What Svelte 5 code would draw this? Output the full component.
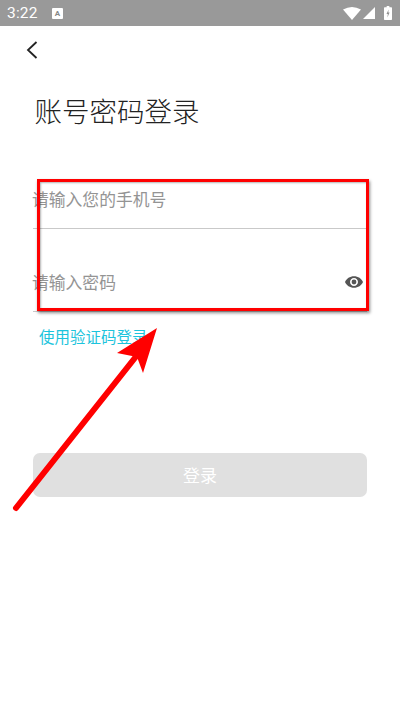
<script lang="ts">
  let phone = $state('')
  let password = $state('')
</script>

<div class="page">
  <div class="status">
    <span class="time">3:22</span>
    <span class="a-icon">A</span>
    <span class="status-icons">
      <svg width="18" height="13" viewBox="0 0 17 13" preserveAspectRatio="none"><path d="M0 2.5Q8.5-2.5 17 2.5L8.5 13Z" fill="#fff"/></svg>
      <svg width="12" height="12" viewBox="0 0 13 13"><path d="M13 0V13H0Z" fill="#fff"/></svg>
      <svg class="batt" width="8" height="14" viewBox="0 0 9 14" preserveAspectRatio="none"><path d="M3 0H6V1.2H8.2A.8.8 0 0 1 9 2V13.2A.8.8 0 0 1 8.2 14H.8A.8.8 0 0 1 0 13.2V2A.8.8 0 0 1 .8 1.2H3Z" fill="#fff"/><path d="M5.2 3.5 2.8 8H4.3L3.800 11.5 6.300 6.600H4.800Z" fill="#8f8f8f"/></svg>
    </span>
  </div>

  <button class="back" type="button" aria-label="返回">
    <svg width="14" height="20" viewBox="0 0 14 20"><path d="M11.5 2 3 10l8.5 8" fill="none" stroke="#222" stroke-width="1.800"/></svg>
  </button>

  <h1>账号密码登录</h1>

  <form class="form">
    <label class="field">
      <input bind:value={phone} placeholder="请输入您的手机号" />
    </label>
    <label class="field">
      <input type="password" bind:value={password} placeholder="请输入密码" />
      <svg class="eye" width="20" height="14" viewBox="0 0 20 14"><path fill-rule="evenodd" d="M10 1.200C5.900 1.200 2.400 3.600 1 7c1.400 3.400 4.900 5.800 9 5.800s7.600-2.400 9-5.800C17.600 3.600 14.100 1.200 10 1.200ZM10 11c-2.200 0-4-1.800-4-4s1.800-4 4-4 4 1.800 4 4-1.800 4-4 4Zm0-6.400A2.400 2.400 0 1 0 10 9.400 2.400 2.400 0 0 0 10 4.600Z" fill="#555"/></svg>
    </label>
    <a class="code-link" href="#code">使用验证码登录</a>
    <button class="submit" type="button">登录</button>
  </form>

  <div class="mark-box"></div>
  <svg class="mark-arrow" width="400" height="712" viewBox="0 0 400 712">
    <path d="M16 508 138 354" stroke="#f00" stroke-width="6" stroke-linecap="round" fill="none"/>
    <path d="M157 328 117 353 137 357 143 373Z" fill="#f00"/>
  </svg>
</div>

<style>
  :global(body) { margin:0; background:#fff; }
  .page { position:relative; width:400px; height:712px; overflow:hidden; background:#fff; font-family:"Noto Sans CJK SC","Noto Sans",sans-serif; }
  .status { display:flex; align-items:center; height:26px; padding:0 8px 0 7px; box-sizing:border-box; background:#999; color:#fff; }
  .time { font:15.500px Roboto,sans-serif; width:45px; letter-spacing:.2px; }
  .a-icon { display:grid; place-items:center; width:11px; height:11px; margin-left:0; background:#fff; color:#888; font:bold 8px Roboto,sans-serif; border-radius:1px; }
  .status-icons { display:flex; align-items:center; gap:2px; margin-left:auto; }
  .batt { margin-left:7px; }
  .back { display:block; margin:14px 0 0 25px; padding:0; width:14px; height:20px; background:none; border:0; }
  h1 { margin:30px 0 0 34.500px; font-size:27.500px; font-weight:300; line-height:40px; color:#222; }
  .form { display:flex; flex-direction:column; margin:0 33px; }
  .field { display:flex; align-items:center; height:83px; box-sizing:border-box; border-bottom:1px solid #c9c9c9; }
  .field:first-child { height:99px; padding-top:39px; }
  .field:nth-child(2) { padding-top:23px; }
  input { flex:1; min-width:0; padding:0; border:0; outline:0; background:none; font:400 16.800px "Noto Sans CJK SC",sans-serif; color:#333; margin-left:-1px; }
  input::placeholder { color:#949494; opacity:1; }
  .eye { flex:none; margin-right:3px; }
  .code-link { margin:12px 0 0 6px; font-size:15.500px; font-weight:400; line-height:24px; color:#1cc4dc; text-decoration:none; }
  .submit { height:44px; margin-top:105px; padding:0 0 2px; background:#e0e0e0; border:0; border-radius:7px; color:#fff; font:400 17px "Noto Sans CJK SC",sans-serif; }
  .mark-box { position:absolute; left:37px; top:179px; width:332px; height:132px; box-sizing:border-box; border:3px solid #f00; box-shadow:1px 2px 3px rgba(0,0,0,.45), inset 1px 1px 2px rgba(0,0,0,.3); }
  .mark-arrow { position:absolute; left:0; top:0; pointer-events:none; }
</style>
